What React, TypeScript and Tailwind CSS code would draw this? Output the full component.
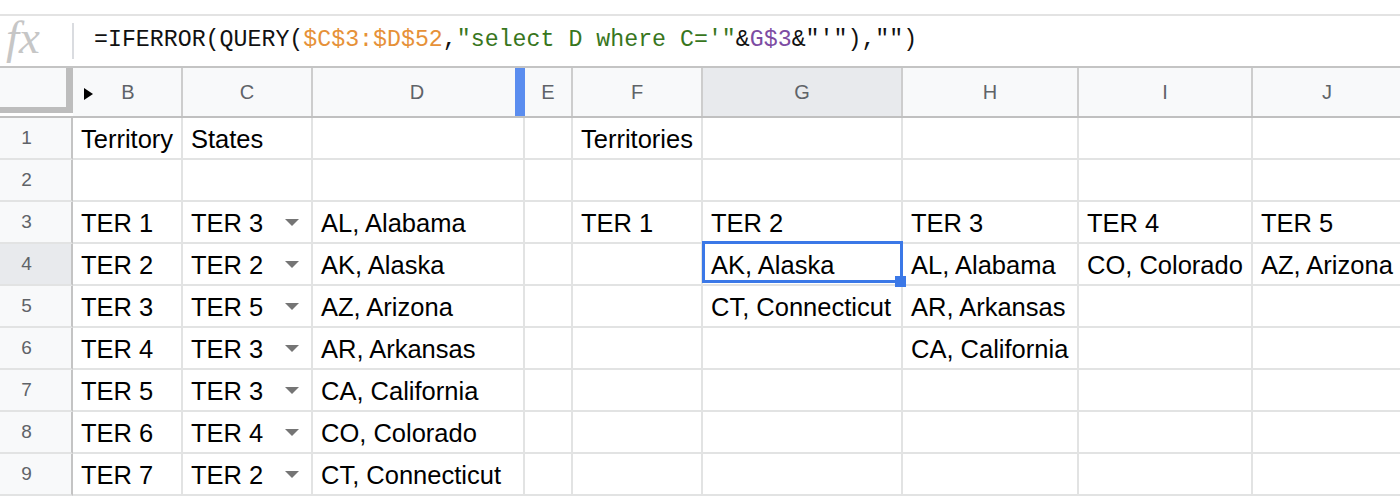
import React from "react";

type Col = { k: string; w: string };

const cols: Col[] = [
  { k: "B", w: "w-[110px]" },
  { k: "C", w: "w-[130px]" },
  { k: "D", w: "w-[212px]" },
  { k: "E", w: "w-[48px]" },
  { k: "F", w: "w-[130px]" },
  { k: "G", w: "w-[200px]" },
  { k: "H", w: "w-[176px]" },
  { k: "I", w: "w-[174px]" },
  { k: "J", w: "w-[150px]" },
];

type Cell = { t?: string; dd?: boolean; sel?: boolean };

const rows: Record<string, Cell>[] = [
  { B: { t: "Territory" }, C: { t: "States" }, F: { t: "Territories" } },
  {},
  {
    B: { t: "TER 1" },
    C: { t: "TER 3", dd: true },
    D: { t: "AL, Alabama" },
    F: { t: "TER 1" },
    G: { t: "TER 2" },
    H: { t: "TER 3" },
    I: { t: "TER 4" },
    J: { t: "TER 5" },
  },
  {
    B: { t: "TER 2" },
    C: { t: "TER 2", dd: true },
    D: { t: "AK, Alaska" },
    G: { t: "AK, Alaska", sel: true },
    H: { t: "AL, Alabama" },
    I: { t: "CO, Colorado" },
    J: { t: "AZ, Arizona" },
  },
  {
    B: { t: "TER 3" },
    C: { t: "TER 5", dd: true },
    D: { t: "AZ, Arizona" },
    G: { t: "CT, Connecticut" },
    H: { t: "AR, Arkansas" },
  },
  {
    B: { t: "TER 4" },
    C: { t: "TER 3", dd: true },
    D: { t: "AR, Arkansas" },
    H: { t: "CA, California" },
  },
  { B: { t: "TER 5" }, C: { t: "TER 3", dd: true }, D: { t: "CA, California" } },
  { B: { t: "TER 6" }, C: { t: "TER 4", dd: true }, D: { t: "CO, Colorado" } },
  { B: { t: "TER 7" }, C: { t: "TER 2", dd: true }, D: { t: "CT, Connecticut" } },
];

function Arrow() {
  return (
    <svg width="14" height="7" viewBox="0 0 14 7" className="shrink-0">
      <path d="M0 0 L14 0 L7 7 Z" fill="#757575" />
    </svg>
  );
}

function HeaderCell({ c }: { c: Col }) {
  const selected = c.k === "G";
  if (c.k === "D") {
    return (
      <div className={`${c.w} h-full flex shrink-0 bg-[#f8f9fa]`}>
        <div className="flex-1 flex items-center justify-center pl-[6px]">{c.k}</div>
        <div className="w-[10px] h-full bg-[#5b8def]" />
      </div>
    );
  }
  return (
    <div
      className={`${c.w} relative h-full shrink-0 flex items-center justify-center border-r-2 border-[#cdcdcd] ${
        selected ? "bg-[#e8eaed]" : "bg-[#f8f9fa]"
      }`}
    >
      {c.k === "B" && (
        <svg
          width="9"
          height="12"
          viewBox="0 0 9 12"
          className="absolute left-[11px] top-[20px]"
        >
          <path d="M0 0 L9 6 L0 12 Z" fill="#000" />
        </svg>
      )}
      <span className={c.k === "B" ? "pl-[2px]" : ""}>{c.k}</span>
    </div>
  );
}

export default function App() {
  const formula = (
    <span>
      <span className="text-[#111]">=IFERROR(QUERY(</span>
      <span className="text-[#e69138]">$C$3:$D$52</span>
      <span className="text-[#111]">,</span>
      <span className="text-[#38761d]">"select D where C='"</span>
      <span className="text-[#111]">&amp;</span>
      <span className="text-[#7d4ca3]">G$3</span>
      <span className="text-[#111]">&amp;</span>
      <span className="text-[#111]">"'"),"")</span>
    </span>
  );

  return (
    <div className="w-[1400px] h-[496px] overflow-hidden bg-white font-['Liberation_Sans',Arial,sans-serif]">
      {/* top strip */}
      <div className="h-[14px] bg-white" />
      <div className="h-[2px] bg-[#e3e3e3]" />
      {/* formula bar */}
      <div className="h-[52px] flex items-center border-b-2 border-[#c4c4c4]">
        <div className="w-[72px] h-full flex items-center pl-[6px] text-[#c6c6c6] italic font-['Liberation_Serif',serif] text-[47px] leading-none">
          <span className="-mt-[7px]">fx</span>
        </div>
        <div className="w-[2px] h-[36px] bg-[#dadce0]" />
        <div className="ml-[20px] whitespace-pre font-['Liberation_Mono',monospace] text-[23.25px] leading-none">
          {formula}
        </div>
      </div>

      {/* column header row */}
      <div className="flex h-[50px] border-b-2 border-[#c0c0c0] text-[#5f6368] text-[20px]">
        <div className="w-[73px] h-full shrink-0 flex flex-col">
          <div className="h-[39px] flex">
            <div className="flex-1 bg-[#f8f9fa]" />
            <div className="w-[7px] bg-[#bdbdbd]" />
          </div>
          <div className="h-[6px] bg-[#bdbdbd]" />
          <div className="flex-1 bg-white" />
        </div>
        {cols.map((c) => (
          <HeaderCell key={c.k} c={c} />
        ))}
      </div>

      {/* data rows */}
      {rows.map((r, i) => (
        <div key={i} className="flex h-[42px] shrink-0">
          <div
            className={`w-[73px] shrink-0 flex items-center justify-center pr-[18px] border-r-2 border-b-2 border-r-[#c4c4c4] border-b-[#e2e3e3] text-[19px] text-[#5f6368] ${
              i === 3 ? "bg-[#e8eaed]" : "bg-[#f8f9fa]"
            }`}
          >
            {i + 1}
          </div>
          {cols.map((c) => {
            const cell = r[c.k] || {};
            return (
              <div
                key={c.k}
                className={`${c.w} relative shrink-0 flex items-center border-r-2 border-b-2 border-[#e2e3e3] pl-[8px] text-[25.5px] text-black whitespace-nowrap ${
                  cell.dd ? "justify-between pr-[12px]" : ""
                } ${cell.sel ? "z-10" : ""}`}
              >
                {cell.t && <span className="pt-[2px]">{cell.t}</span>}
                {cell.dd && <Arrow />}
                {cell.sel && (
                  <>
                    <div className="absolute z-10 left-[-1px] top-[-3px] w-[201px] h-[42px] border-[3px] border-[#3b78e7] pointer-events-none" />
                    <div className="absolute z-20 left-[192px] top-[32px] w-[11px] h-[11px] bg-[#3b78e7] pointer-events-none" />
                  </>
                )}
              </div>
            );
          })}
        </div>
      ))}
    </div>
  );
}
